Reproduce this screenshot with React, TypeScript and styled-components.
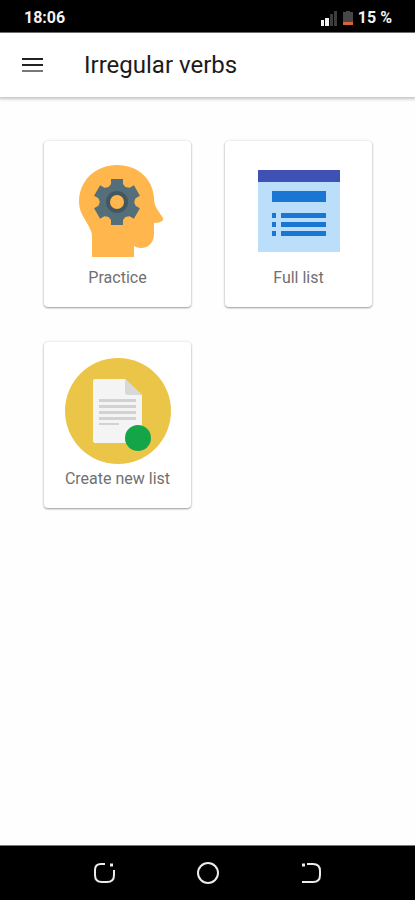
import React from "react";
import styled, { createGlobalStyle } from "styled-components";

const GlobalStyle = createGlobalStyle`
  *, *::before, *::after { box-sizing: border-box; }
  body {
    margin: 0;
    background: #fff;
    font-family: Roboto, "Liberation Sans", sans-serif;
  }
`;

const Screen = styled.div`
  display: flex;
  flex-direction: column;
  min-height: 100vh;
  background: #fefefe;
`;

const StatusBar = styled.div`
  display: flex;
  align-items: center;
  justify-content: space-between;
  height: 33px;
  padding: 4px 23px 0 24px;
  background: #000;
  border-bottom: 1px solid #777;
  color: #f2f2f2;
  font-size: 16px;
  font-weight: 700;
  line-height: 20px;
`;

const StatusGroup = styled.div`
  display: flex;
  align-items: center;
  gap: 5px;
`;

const AppBar = styled.header`
  display: flex;
  align-items: center;
  gap: 40px;
  height: 64px;
  padding: 0 22px;
  background: #fff;
  box-shadow: 0 1px 3px 1px rgba(0, 0, 0, 0.24);
`;

const IconButton = styled.button`
  display: flex;
  align-items: center;
  justify-content: center;
  padding: 0;
  border: 0;
  background: none;
  cursor: pointer;
`;

const Title = styled.h1`
  margin: 0;
  color: #1b1b1b;
  font-size: 24px;
  font-weight: 400;
  line-height: 28px;
`;

const CardGrid = styled.main`
  flex: 1;
  display: grid;
  grid-template-columns: 1fr 1fr;
  align-content: start;
  gap: 35px 34px;
  padding: 44px 43px 44px 44px;
`;

const Card = styled.button`
  display: flex;
  flex-direction: column;
  align-items: center;
  height: 166px;
  padding: 0;
  border: 0;
  border-radius: 4px;
  background: #fff;
  box-shadow: 0 1px 2px rgba(0, 0, 0, 0.36), 0 0 3px rgba(0, 0, 0, 0.12);
  color: #707070;
  font: 400 16px/20px Roboto, "Liberation Sans", sans-serif;
  cursor: pointer;
`;

const Artwork = styled.span<{ $compact?: boolean }>`
  display: flex;
  align-items: center;
  justify-content: center;
  height: ${(p) => (p.$compact ? 108 : 92)}px;
  margin-top: ${(p) => (p.$compact ? 15 : 24)}px;
  margin-bottom: ${(p) => (p.$compact ? 4 : 11)}px;
`;

const NavBar = styled.nav`
  display: grid;
  grid-template-columns: repeat(3, 1fr);
  height: 55px;
  padding: 0 12.5%;
  border-top: 1px solid #777;
  background: #000;
`;

const SignalIcon = () => (
  <svg width="17" height="15" viewBox="0 0 17 15" aria-hidden="true">
    <path d="M0 9h3v6H0zM4 7h4v8H4z" fill="#f2f2f2" />
    <path d="M9 3h3v12H9zM13 0h3v15h-3z" fill="#3c3c3c" />
  </svg>
);

const BatteryIcon = () => (
  <svg width="10" height="14" viewBox="0 0 10 14" aria-hidden="true">
    <path d="M3 0h4v1h3v10H0V1h3z" fill="#464646" />
    <path d="M0 11h10v3H0z" fill="#d9633f" />
  </svg>
);

const MenuIcon = () => (
  <svg width="22" height="16" viewBox="0 0 22 16" aria-hidden="true">
    <path d="M0 1h21v2H0zM0 7h21v2H0z" fill="#222" />
    <path d="M0 13h21v2H0z" fill="#777" />
  </svg>
);

const HeadIcon = () => (
  <svg width="92" height="92" viewBox="-6 0 92 92" aria-hidden="true">
    <path
      d="M14 92V70C13 64 10 60 6 53C3 48 1 43 1 37C1 15 18 0 39 0C60 0 75 14 76 33C76 40 79 44 81 47L85 53C86 56 83 58 76 58V69C76 77 71 83 63 83C60 83 58 82 56 81V92Z"
      fill="#ffb74d"
    />
    <g transform="translate(39 37)" fill="#546e7a">
      <circle r="17" />
      {[0, 60, 120, 180, 240, 300].map((angle) => (
        <path key={angle} d="M-10 -13L-6 -18V-23H6V-18L10 -13Z" transform={`rotate(${angle})`} />
      ))}
      <circle r="11" fill="#435761" />
      <circle r="7" fill="#ffb74d" />
    </g>
  </svg>
);

const ListIcon = () => (
  <svg width="82" height="82" viewBox="0 0 82 82" aria-hidden="true">
    <path d="M0 11h82v71H0z" fill="#bbdefb" />
    <path d="M0 0h82v12H0z" fill="#3f51b5" />
    <path
      d="M14 21h54v11H14zM14 43h4v5h-4zM14 52h4v5h-4zM14 61h4v5h-4zM23 43h45v5H23zM23 52h45v5H23zM23 61h45v5H23z"
      fill="#1976d2"
    />
  </svg>
);

const DocumentIcon = () => (
  <svg width="108" height="108" viewBox="0 0 108 108" aria-hidden="true">
    <circle cx="54" cy="54" r="53" fill="#ebc547" />
    <path d="M31 22H61L78 38V86H31Q29 86 29 84V24Q29 22 31 22Z" fill="#f4f4f4" />
    <path d="M61 22L78 38H64Q61 38 61 35Z" fill="#d8d8d4" />
    <path d="M35 42h37v3H35zM35 48h37v3H35zM35 54h37v3H35zM35 60h37v3H35zM35 66h20v2H35z" fill="#d2d2d2" />
    <circle cx="74" cy="81" r="13" fill="#13a548" />
  </svg>
);

const RecentsIcon = () => (
  <svg width="24" height="24" viewBox="0 0 24 24" fill="none" stroke="#ececec" strokeWidth="2" aria-hidden="true">
    <path d="M13 3H9Q3 3 3 9V14Q3 21 10 21H15Q22 21 22 14V9" />
    <path d="M18 4h3" strokeWidth="3" />
  </svg>
);

const HomeIcon = () => (
  <svg width="24" height="24" viewBox="0 0 24 24" fill="none" stroke="#ececec" strokeWidth="2" aria-hidden="true">
    <circle cx="12" cy="12" r="10" />
  </svg>
);

const BackIcon = () => (
  <svg width="24" height="24" viewBox="0 0 24 24" fill="none" stroke="#ececec" strokeWidth="2" aria-hidden="true">
    <path d="M8 3H14Q21 3 21 10V14Q21 21 14 21H3" />
    <path d="M3 4h3" strokeWidth="3" />
  </svg>
);

export default function App() {
  return (
    <Screen>
      <GlobalStyle />
      <StatusBar>
        <span>18:06</span>
        <StatusGroup>
          <SignalIcon />
          <BatteryIcon />
          <span>15 %</span>
        </StatusGroup>
      </StatusBar>
      <AppBar>
        <IconButton aria-label="Open menu">
          <MenuIcon />
        </IconButton>
        <Title>Irregular verbs</Title>
      </AppBar>
      <CardGrid>
        <Card>
          <Artwork><HeadIcon /></Artwork>
          Practice
        </Card>
        <Card>
          <Artwork><ListIcon /></Artwork>
          Full list
        </Card>
        <Card>
          <Artwork $compact><DocumentIcon /></Artwork>
          Create new list
        </Card>
      </CardGrid>
      <NavBar aria-label="System navigation">
        <IconButton aria-label="Recent apps"><RecentsIcon /></IconButton>
        <IconButton aria-label="Home"><HomeIcon /></IconButton>
        <IconButton aria-label="Back"><BackIcon /></IconButton>
      </NavBar>
    </Screen>
  );
}
